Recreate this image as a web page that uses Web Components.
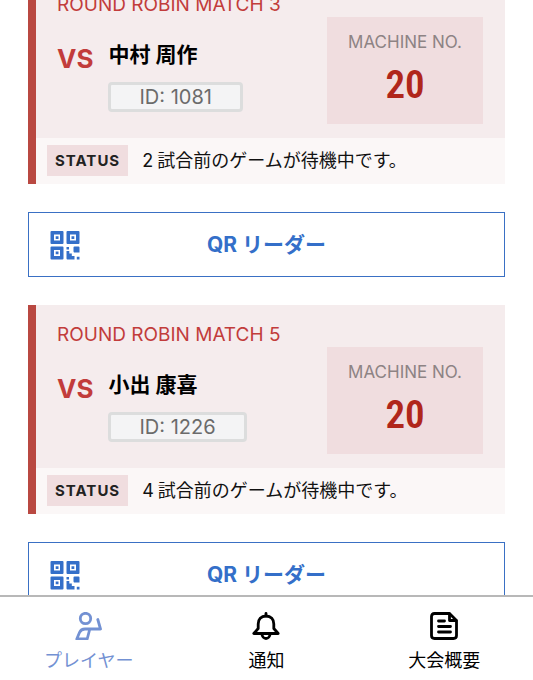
<!DOCTYPE html>
<html lang="ja">
<head>
  <meta charset="utf-8">
  <meta name="viewport" content="width=device-width, initial-scale=1">
  <title>マッチ一覧</title>
  <style>
    body {
      margin: 0;
      font-family: Inter, "Noto Sans CJK JP", sans-serif;
      color: #111;
      background: #fff;
    }
  </style>
</head>
<body>
  <player-app>
    <match-card match="ROUND ROBIN MATCH 3" player="中村 周作" player-id="1081" machine="20"><span>2</span>試合前のゲームが待機中です。</match-card>
    <qr-button>リーダー</qr-button>
    <match-card match="ROUND ROBIN MATCH 5" player="小出 康喜" player-id="1226" machine="20"><span>4</span>試合前のゲームが待機中です。</match-card>
    <qr-button>リーダー</qr-button>
    <tab-bar slot="footer">
      <tab-item href="#player" icon="player" active>プレイヤー</tab-item>
      <tab-item href="#notice" icon="bell">通知</tab-item>
      <tab-item href="#about" icon="document">大会概要</tab-item>
    </tab-bar>
  </player-app>

  <script>
    class PlayerApp extends HTMLElement {
      constructor() {
        super();
        this.attachShadow({ mode: 'open' });
      }

      connectedCallback() {
        this.shadowRoot.innerHTML = `
          <style>
            :host {
              display: flex;
              flex-direction: column;
              height: 100vh;
            }
            main {
              flex: 1;
              min-height: 0;
              overflow-y: auto;
              scrollbar-width: none;
            }
            .list {
              display: flex;
              flex-direction: column;
              gap: 28px;
              padding: 0 28px 28px;
            }
          </style>
          <main><div class="list"><slot></slot></div></main>
          <slot name="footer"></slot>
        `;
      }

      scrollList(top) {
        this.shadowRoot.querySelector('main').scrollTop = top;
      }
    }

    class MatchCard extends HTMLElement {
      constructor() {
        super();
        this.attachShadow({ mode: 'open' });
      }

      connectedCallback() {
        this.shadowRoot.innerHTML = `
          <style>
            :host {
              display: block;
              border-left: 8px solid #b94841;
            }
            .body {
              display: flex;
              justify-content: space-between;
              align-items: flex-end;
              padding: 18px 22px 14px 21px;
              background: #f5eced;
            }
            .info {
              align-self: flex-start;
            }
            h2 {
              margin: 0;
              font-size: 19px;
              line-height: 24px;
              font-weight: 400;
              color: #c23c3b;
              white-space: nowrap;
            }
            .versus {
              display: flex;
              gap: 15px;
              margin: 18px 0 12px;
            }
            .vs {
              font-size: 26px;
              line-height: 48px;
              font-weight: 700;
              color: #c23c3b;
            }
            .name {
              margin: 0 0 7px;
              font-size: 21px;
              line-height: 40px;
              font-weight: 700;
              color: #000;
            }
            .id {
              display: inline-block;
              padding: 0 28px;
              border: 3px solid #dcdddd;
              border-radius: 4px;
              background: #f4f4f5;
              font-size: 20px;
              line-height: 24px;
              color: #6b6b6b;
            }
            .machine {
              padding: 13px 21px 8px;
              background: #f0dddf;
              text-align: center;
            }
            dl {
              margin: 0;
            }
            dt {
              font-size: 17px;
              line-height: 24px;
              color: #8d8384;
            }
            dd {
              margin: 0;
              font-family: "Roboto Condensed", "Liberation Sans Narrow", sans-serif;
              font-size: 39px;
              line-height: 62px;
              font-weight: 600;
              color: #b0261b;
            }
            .status {
              display: flex;
              align-items: center;
              gap: 14px;
              padding: 7px 11px 8px;
              background: #fbf7f7;
              font-size: 18px;
              line-height: 31px;
            }
            .tag {
              padding: 0 8px;
              background: #f0dddf;
              font-size: 15px;
              font-weight: 700;
              letter-spacing: 1px;
              color: #222;
            }
            ::slotted(span) {
              margin-right: 4px;
            }
          </style>
          <article>
            <div class="body">
              <div class="info">
                <h2>${this.getAttribute('match')}</h2>
                <div class="versus">
                  <div class="vs">VS</div>
                  <div>
                    <p class="name">${this.getAttribute('player')}</p>
                    <div class="id">ID: ${this.getAttribute('player-id')}</div>
                  </div>
                </div>
              </div>
              <dl class="machine">
                <dt>MACHINE NO.</dt>
                <dd>${this.getAttribute('machine')}</dd>
              </dl>
            </div>
            <div class="status">
              <span class="tag">STATUS</span>
              <div><slot></slot></div>
            </div>
          </article>
        `;
      }
    }

    class QrButton extends HTMLElement {
      constructor() {
        super();
        this.attachShadow({ mode: 'open' });
      }

      connectedCallback() {
        this.shadowRoot.innerHTML = `
          <style>
            :host {
              display: block;
            }
            button {
              display: grid;
              grid-template-columns: 30px 1fr 30px;
              align-items: center;
              width: 100%;
              margin: 0;
              padding: 16px 21px;
              border: 1px solid #3a70c4;
              background: #fff;
              color: #346fc9;
              font: inherit;
              font-size: 21px;
              line-height: 31px;
              font-weight: 700;
            }
            svg {
              display: block;
              width: 30px;
              height: 30px;
            }
            b {
              margin-right: 5px;
              font-weight: 700;
            }
          </style>
          <button type="button">
            <svg viewBox="0 0 30 30" fill="currentColor" aria-hidden="true">
              <path fill-rule="evenodd" d="M1.5 1h11q1 0 1 1v11q0 1-1 1h-11q-1 0-1-1v-11q0-1 1-1zM4 4.500v6h6v-6zM17.500 1h11q1 0 1 1v11q0 1-1 1h-11q-1 0-1-1v-11q0-1 1-1zM20 4.500v6h6v-6zM1.500 16.500h11q1 0 1 1v11q0 1-1 1h-11q-1 0-1-1v-11q0-1 1-1zM4 20v6h6v-6z"/>
              <path d="M5.700 6.200h2.800v2.800h-2.800zM21.500 6.200h2.800v2.800h-2.800zM5.700 21.500h2.800v2.800h-2.800z"/>
              <path d="M16.500 17h2.500v2.500h-2.500zM24.500 16.500h4q1 0 1 1v5h-5.500l-.5-1v-4q0-1 1-1zM16.500 21h2.800v2.500h2.500v2.500h2.700v3.500h-7q-1 0-1-1zM26.800 26.800h2.700v2.700h-2.700z"/>
            </svg>
            <span><b>QR</b><slot></slot></span>
          </button>
        `;
      }
    }

    class TabBar extends HTMLElement {
      constructor() {
        super();
        this.attachShadow({ mode: 'open' });
      }

      connectedCallback() {
        this.shadowRoot.innerHTML = `
          <style>
            :host {
              display: block;
              border-top: 2px solid #b8b8b8;
              background: #fff;
            }
            nav {
              display: grid;
              grid-template-columns: repeat(3, 1fr);
            }
          </style>
          <nav><slot></slot></nav>
        `;
      }
    }

    const icons = {
      player: `
        <circle cx="10.500" cy="6.500" r="5.200"/>
        <path d="M22.800 7.500l2.700 9.500H10Q6 17 4.500 20.500L1.800 27h10.400l2.600-10"/>`,
      bell: `
        <path d="M14 1.500v2.500"/>
        <path d="M14 4C9 4 6.200 7.500 6.200 12v4.500L1.800 21.500h24.400l-4.400-5V12C21.800 7.500 19 4 14 4z"/>
        <path d="M10 22a4 4.500 0 0 0 8 0"/>`,
      document: `
        <path d="M19.500 1.500H4.500q-3 0-3 3v19q0 3 3 3h19q3 0 3-3V8.500z"/>
        <path d="M19.500 2v6.500h6.500M8.500 9h6M8.500 14.500h12M8.500 20h12"/>`
    };

    class TabItem extends HTMLElement {
      constructor() {
        super();
        this.attachShadow({ mode: 'open' });
      }

      connectedCallback() {
        this.shadowRoot.innerHTML = `
          <style>
            :host {
              display: block;
              color: #000;
            }
            :host([active]) {
              color: #7391d3;
            }
            a {
              display: flex;
              flex-direction: column;
              align-items: center;
              gap: 7px;
              padding: 15px 0 5px;
              color: inherit;
              font-size: 18px;
              line-height: 28px;
              text-decoration: none;
            }
            svg {
              width: 28px;
              height: 28px;
            }
          </style>
          <a href="${this.getAttribute('href')}">
            <svg viewBox="0 0 28 28" fill="none" stroke="currentColor" stroke-width="2.800" stroke-linejoin="round" stroke-linecap="round" aria-hidden="true">${icons[this.getAttribute('icon')]}</svg>
            <span><slot></slot></span>
          </a>
        `;
      }
    }

    customElements.define('player-app', PlayerApp);
    customElements.define('match-card', MatchCard);
    customElements.define('qr-button', QrButton);
    customElements.define('tab-bar', TabBar);
    customElements.define('tab-item', TabItem);

    // open the list just past the top edge of the first card
    document.querySelector('player-app').scrollList(25);
  </script>
</body>
</html>
